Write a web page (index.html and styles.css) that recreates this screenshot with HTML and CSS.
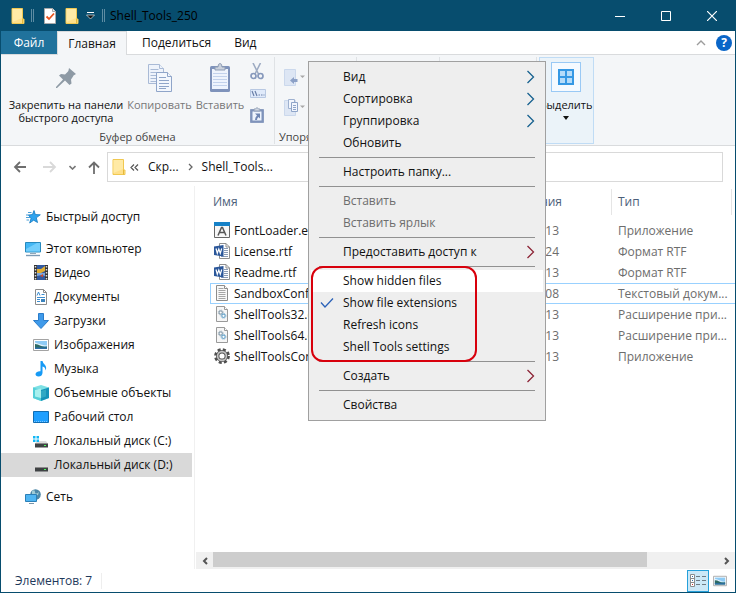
FILE: index.html
```html
<!DOCTYPE html>
<html lang="ru">
<head>
<meta charset="utf-8">
<title>Shell_Tools_250</title>
<link rel="stylesheet" href="styles.css">
</head>
<body>
<svg class="defs" aria-hidden="true">
  <defs>
    <symbol id="folder" viewBox="0 0 16 18">
      <path d="M2 1.500h10.500v10.500h1.500v4.500H2z" fill="#ffe08a" stroke="#f0c851"/>
      <path d="M2.500 2h9.500v9L2.500 15z" fill="#ffeaa6"/>
      <path d="M12.500 12v4.500" stroke="#e5b93c" fill="none"/>
    </symbol>
    <symbol id="word" viewBox="0 0 16 16">
      <path d="M5.500.500h6.500l3.500 3.500v11.500H5.500z" fill="#fff" stroke="#8f8f8f"/>
      <path d="M12 .500v3.500h3.500" fill="none" stroke="#8f8f8f"/>
      <path d="M10 5.500h4M10 7.500h4M10 9.500h4M10 11.500h4M7 13.500h7" stroke="#8a9bb5"/>
      <path d="M0 3.500 9.500 2v11.500L0 12z" fill="#2b579a"/>
      <path d="M2 5.500 3.300 10.200 4.800 6l1.500 4.200 1.400-4.700" fill="none" stroke="#fff" stroke-width="1.200"/>
    </symbol>
    <symbol id="dll" viewBox="0 0 16 16">
      <path d="M2.500.500h8l3 3v12h-11z" fill="#f6f6f6" stroke="#999"/>
      <path d="M10.500.500v3h3" fill="#fff" stroke="#999"/>
      <circle cx="6.700" cy="6.500" r="1.700" fill="#fff" stroke="#8ea1b0" stroke-width="1.200"/>
      <circle cx="6.700" cy="6.500" r="2.500" fill="none" stroke="#a3b4c0" stroke-dasharray="1 1" stroke-width="1"/>
      <circle cx="9.500" cy="9.800" r="1.700" fill="#fff" stroke="#72a9cc" stroke-width="1.200"/>
      <circle cx="9.500" cy="9.800" r="2.500" fill="none" stroke="#8fbcd8" stroke-dasharray="1 1" stroke-width="1"/>
    </symbol>
    <symbol id="text" viewBox="0 0 16 16">
      <path d="M2.500.500h8l3 3v12h-11z" fill="#f8f8f8" stroke="#8c8c8c"/>
      <path d="M10.500.500v3h3" fill="#fff" stroke="#8c8c8c"/>
      <path d="M4.500 3.500h5M4.500 5.500h7M4.500 7.500h7M4.500 9.500h7M4.500 11.500h7M4.500 13.500h7" stroke="#a5a5a5"/>
    </symbol>
    <symbol id="drive" viewBox="0 0 16 16">
      <path d="M4 8h9l2 3H2z" fill="#dcdcdc"/>
      <path d="M2 10.500h13V14.500H2z" fill="#3f4244"/>
      <path d="M2 10.500h13" stroke="#8c8c8c"/>
      <path d="M11 12h2v1h-2z" fill="#4cff5a"/>
    </symbol>
    <symbol id="picture" viewBox="0 0 16 14">
      <path d="M.5 1.500h15v11H.5z" fill="#fff" stroke="#a3a3a3"/>
      <path d="M2 3h12v8H2z" fill="#8ecbf5"/>
      <path d="M2 4.500q3 1 6 2t6 1V8H2z" fill="#e3f2fc"/>
      <path d="M2 6q3 0 5 1.500t7 1V11H2z" fill="#2d6a64"/>
      <path d="M2 9.500h12V11H2z" fill="#2d6fa8"/>
    </symbol>
    <symbol id="chevron" viewBox="0 0 9 14"><path d="M1.500 1 7.500 7l-6 6" fill="none" stroke="currentColor" stroke-width="1.300"/></symbol>
  </defs>
</svg>

<div class="window">
  <header class="titlebar">
    <svg class="i-folder" aria-hidden="true"><use href="#folder"/></svg>
    <span class="grip"></span>
    <button class="quick" aria-label="Свойства">
      <svg width="14" height="16" viewBox="0 0 14 16"><path d="M1.500.500h8l3 3v12h-11z" fill="#fff" stroke="#a9a9a9"/><path d="M9.500.500v3h3" fill="#eee" stroke="#a9a9a9"/><path d="M3.500 8.500 6 11l5-5.500" fill="none" stroke="#e8541e" stroke-width="1.800"/></svg>
    </button>
    <button class="quick" aria-label="Новая папка"><svg class="i-folder"><use href="#folder"/></svg></button>
    <button class="quick drop" aria-label="Настройка панели">
      <svg width="9" height="8" viewBox="0 0 9 8"><path d="M1 .5h7" stroke="#fff"/><path d="M.5 3h8L4.500 7z" fill="#111" stroke="#dfe9ee" stroke-width=".7"/></svg>
    </button>
    <span class="grip"></span>
    <h1>Shell_Tools_250</h1>
    <button class="caption" aria-label="Свернуть"><svg width="10" height="10"><path d="M0 5.500h10" stroke="#fff"/></svg></button>
    <button class="caption" aria-label="Развернуть"><svg width="10" height="10"><path d="M.5.500h9v9h-9z" fill="none" stroke="#fff"/></svg></button>
    <button class="caption" aria-label="Закрыть"><svg width="10" height="10"><path d="m0 0 10 10M10 0 0 10" stroke="#fff" stroke-width="1.200"/></svg></button>
  </header>

  <div class="tabs">
    <button class="tab file">Файл</button>
    <button class="tab active">Главная</button>
    <button class="tab">Поделиться</button>
    <button class="tab view">Вид</button>
    <span class="fill"></span>
    <button class="fold" aria-label="Свернуть ленту"><svg width="10" height="6"><path d="m1 5 4-4 4 4" fill="none" stroke="#9c9c9c" stroke-width="1.400"/></svg></button>
    <button class="help" aria-label="Справка">?</button>
  </div>

  <div class="ribbon">
    <section class="group clipboard">
      <div class="tools">
        <button class="big pin">
          <svg width="22" height="22" viewBox="0 0 22 22"><path d="m14 1 7 6-2.500 1.500-.5 1-2 3 .500 4-2 1.500-4.500-4.500L2 21H1v-1l7-7.500L4 8.500l2-1.500 4 .5 3-3 .500-1z" fill="#8e9aa5"/></svg>
          <span>Закрепить на панели<br>быстрого доступа</span>
        </button>
        <button class="big copy" disabled>
          <svg width="26" height="30" viewBox="0 0 26 30"><g fill="#eef3fb" stroke="#a9bad6"><path d="M1.500 1.500h11l4 4v15h-15z"/><path d="M12.500 1.500v4h4"/><path d="M3.500 6.500h8M3.500 9.500h10M3.500 12.500h10M3.500 15.500h10M3.500 18.500h6"/></g><g fill="#f3f7fd" stroke="#8fa5c9"><path d="M9.500 9.500h11l4 4v15h-15z"/><path d="M20.500 9.500v4h4"/><path d="M12 14.500h7M12 17.500h10M12 20.500h10M12 23.500h10M12 25.500h7"/></g></svg>
          <span>Копировать</span>
        </button>
        <button class="big paste" disabled>
          <svg width="22" height="30" viewBox="0 0 22 30"><rect x="1" y="3" width="20" height="26" rx="1.500" fill="#7f93bb"/><path d="M3 6h16v20H3z" fill="#eef4fd"/><path d="M4 10.500h14M4 13.500h14M4 16.500h14M4 19.500h14M4 22.500h14" stroke="#c2d2ec"/><path d="M6 7V4h3q0-3.500 2-3.500T13 4h3v3z" fill="#cbd2dd" stroke="#8f9db5"/></svg>
          <span>Вставить</span>
        </button>
        <div class="small-tools">
          <button disabled aria-label="Вырезать"><svg width="14" height="17" viewBox="0 0 14 17"><path d="m3 0 5.500 11M10.500 0 5 11" stroke="#9dabc3" stroke-width="1.600" fill="none"/><g fill="none" stroke="#8799bc" stroke-width="1.700"><ellipse cx="3.500" cy="13" rx="2.500" ry="2.500"/><ellipse cx="10.500" cy="13" rx="2.500" ry="2.500"/></g></svg></button>
          <button disabled aria-label="Скопировать путь"><svg width="16" height="9" viewBox="0 0 16 9"><path d="M.5.500h15v8H.5z" fill="#e0eafa" stroke="#b8c8e2"/><path d="m2 2 2 5M5 2l2 5M8.500 6h1.500M11 6h1.500M13.500 6h1" stroke="#6a7fa8" stroke-width="1.200"/></svg></button>
          <button disabled aria-label="Вставить ярлык"><svg width="14" height="16" viewBox="0 0 14 16"><path d="M.5 2.500h13v13H.5z" fill="#7f93bb" stroke="#8b9dc0"/><path d="M2.500 4.500h9v9h-9z" fill="#eef4fd"/><path d="M4 4V2h1.500q1.500-3 3 0H10v2z" fill="#cfd6e0" stroke="#8f9db5"/><path d="M5 6.500h5v5L8.500 10Q7 11 7 13H5q0-3 2-4.500z" fill="#6f86b3"/></svg></button>
        </div>
      </div>
      <h2>Буфер обмена</h2>
    </section>
    <section class="group organize">
      <div class="tools">
        <div class="small-tools wide">
          <button disabled aria-label="Переместить в"><svg width="21" height="18" viewBox="0 0 21 18"><path d="M.5.500h11v16H.5z" fill="#dde6f4" stroke="#cbd8ec"/><path d="M6 11.500 10 8v2h3.500v3H10v2z" fill="#8ba0c6"/><path d="M16 6.500h5L18.500 9z" fill="#a7a7a7"/></svg></button>
          <button disabled aria-label="Копировать в"><svg width="21" height="18" viewBox="0 0 21 18"><path d="M.5 1.500h11v15H.5z" fill="#dde6f4" stroke="#cbd8ec"/><path d="M4.500.500h6v9h-6z" fill="#f2f6fd" stroke="#9eb1d0"/><path d="M7.500 3.500h6v9h-6z" fill="#f2f6fd" stroke="#8fa5c9"/><path d="M9 6.500h3M9 8.500h3M9 10.500h3" stroke="#8fa5c9"/><path d="M16 6.500h5L18.500 9z" fill="#a7a7a7"/></svg></button>
        </div>
      </div>
      <h2>Упоря</h2>
    </section>
    <section class="group create"></section>
    <section class="group open"></section>
    <section class="group select">
      <button class="big select-all">
        <span class="tile"><svg width="16" height="16"><path d="M1 1h14v14H1zM8 1v14M1 8h14" fill="#b5dcfa" stroke="#3598e4" stroke-width="2"/></svg></span>
        <span>Выделить</span>
        <svg width="6" height="4"><path d="M0 0h6L3 4z" fill="#111"/></svg>
      </button>
    </section>
  </div>

  <div class="address-row">
    <button class="nav-btn" aria-label="Назад"><svg width="14" height="12"><path d="M13 6H2M7 1 2 6l5 5" fill="none" stroke="#6e6e6e" stroke-width="1.800"/></svg></button>
    <button class="nav-btn" aria-label="Вперед" disabled><svg width="14" height="12"><path d="M0 6h12M7 1l5 5-5 5" fill="none" stroke="#d9d9d9" stroke-width="1.800"/></svg></button>
    <button class="nav-btn recent" aria-label="Последние расположения"><svg width="7" height="5"><path d="m.5 1 3 3 3-3" fill="none" stroke="#777" stroke-width="1.600"/></svg></button>
    <button class="nav-btn up" aria-label="Вверх"><svg width="12" height="13"><path d="M6 13V2M1 6.500 6 1.500l5 5" fill="none" stroke="#6e6e6e" stroke-width="1.800"/></svg></button>
    <nav class="address" aria-label="Адрес">
      <svg class="i-folder" aria-hidden="true"><use href="#folder"/></svg>
      <svg class="back-crumbs" width="9" height="7"><path d="m4 .5-3 3 3 3M8 .5l-3 3 3 3" fill="none" stroke="#555" stroke-width="1.200"/></svg>
      <a href="#">Скр...</a>
      <svg class="crumb-arrow" width="5" height="8"><path d="m1 1 3 3-3 3" fill="none" stroke="#666" stroke-width="1.300"/></svg>
      <a href="#">Shell_Tools...</a>
    </nav>
  </div>

  <main class="content">
    <nav class="tree" aria-label="Области">
      <ul>
        <li class="root"><a href="#"><svg width="16" height="16" viewBox="0 0 16 16"><path d="m9 1.500 1.300 4 5 .3-4 3 1.200 4.700-3.800-2.300-4 2.800L6 9.500 3.500 6l4-.5z" fill="#2ea3ee" stroke="#1278c0" stroke-width=".8"/><path d="M3 3.500h3.500M1 6h3M1 8.500h4M1.500 11H4" stroke="#4a9fd8"/></svg>Быстрый доступ</a></li>
      </ul>
      <ul>
        <li class="root"><a href="#"><svg width="16" height="16" viewBox="0 0 16 16"><path d="M.5 1.500h15v9.500H.5z" fill="#43b7f5" stroke="#2789bd"/><path d="M1 8 12 2h3v8.500H1z" fill="#73cefc"/><path d="M5 12.500h6" stroke="#92a8b9"/><path d="M1 14.500h14" stroke="#7c9bb5" stroke-width="1.400"/></svg>Этот компьютер</a></li>
        <li><a href="#"><svg width="16" height="16" viewBox="0 0 16 16"><path d="M1 0h14v15H1z" fill="#333"/><path d="M4 0h8v15H4z" fill="#31599f"/><path d="M4 4h4l4-3v5L8 8H4z" fill="#e0ad32"/><path d="M4 8h8v3l-3-1-5 1z" fill="#7fa6dc"/><path d="m7 11 3-2v3z" fill="#d74826"/><path d="M2.500 1v14M13.500 1v14" stroke="#ddd" stroke-width="1.500" stroke-dasharray="1.500 1.500"/></svg>Видео</a></li>
        <li><a href="#"><svg width="16" height="16" viewBox="0 0 16 16"><path d="M2.500.500h8l3 3v12h-11z" fill="#fff" stroke="#8c8c8c"/><path d="M10.500.500v3h3" fill="none" stroke="#8c8c8c"/><path d="m4 6.500 1.500-3.500L7 6.500M8.500 5.500h3M4 8.500h8M4 10.500h3M4 12.500h3" stroke="#3c8dd0" fill="none"/><path d="M8 10h4v3H8z" fill="#3a83bd"/></svg>Документы</a></li>
        <li><a href="#"><svg width="16" height="16" viewBox="0 0 16 16"><path d="M5.500.500h5v7h5L8 15.500.5 7.500h5z" fill="#3f9aea" stroke="#2a7cca"/></svg>Загрузки</a></li>
        <li><a href="#"><svg width="16" height="14"><use href="#picture"/></svg>Изображения</a></li>
        <li><a href="#"><svg width="16" height="16" viewBox="0 0 16 16"><path d="M7.500 0h2q.5 2.500 2.500 4 2 2.500.5 5.500 0-3.500-3-4V12q-.5 3.500-4 3.500-3-.3-3-2.500 1-3 5-2.700z" fill="#169af5"/></svg>Музыка</a></li>
        <li><a href="#"><svg width="16" height="16" viewBox="0 0 16 16"><path d="M0 2.500 8 0l8 2.500V13l-8 3-8-3z" fill="#7de0e4"/><path d="M0 2.500 8 5v11l-8-3z" fill="#55cfd8"/><path d="m8 5 8-2.500V13l-8 3z" fill="#1593b9"/><path d="m2 5 6-1.500V13l-6-1.500z" fill="#a8f0ee"/><path d="m8 6 5-1.500v7L8 13z" fill="#2fa9c4"/></svg>Объемные объекты</a></li>
        <li><a href="#"><svg width="16" height="16" viewBox="0 0 16 16"><path d="M.5 2.500h15v11H.5z" fill="#1e9fff" stroke="#106db3"/><path d="M1 12.500h14" stroke="#7cc7ff" stroke-dasharray="1 1"/></svg>Рабочий стол</a></li>
        <li><a href="#"><svg width="16" height="16" viewBox="0 0 16 16"><use href="#drive" width="16" height="16"/><path d="M0 3h2.500v2.500H0zM3.500 3H6v2.500H3.500zM0 6.500h2.500V9H0zM3.500 6.500H6V9H3.500z" fill="#12b7f5"/></svg>Локальный диск (C:)</a></li>
        <li class="selected"><a href="#"><svg width="16" height="16"><use href="#drive"/></svg>Локальный диск (D:)</a></li>
      </ul>
      <ul>
        <li class="root"><a href="#"><svg width="16" height="16" viewBox="0 0 16 16"><circle cx="10.500" cy="5.500" r="5.300" fill="#4d87a7"/><path d="M7 2q3-2 3 1t4 0l-1 3-3 1-1 2-2-2z" fill="#9fcbd6"/><path d="M.5 5.500h11v7H.5z" fill="#4fb5f2" stroke="#2b7fb7"/><path d="M4 14.500h5" stroke="#7895aa"/></svg>Сеть</a></li>
      </ul>
    </nav>

    <section class="files">
      <table>
        <colgroup><col class="c-name"><col class="c-date"><col class="c-type"><col></colgroup>
        <thead><tr><th>Имя</th><th class="date">Дата изменения</th><th class="type">Тип</th><th class="end"></th></tr></thead>
        <tbody>
          <tr><td><svg width="16" height="16"><path d="M.5.500h15v15H.5z" fill="#f7f7f7" stroke="#666"/><path d="M0 0h16v4H0z" fill="#1681c7"/><path d="M4 13.500 7.500 5.500h1L12 13.500M5.500 10.500h5" fill="none" stroke="#555" stroke-width="1.500"/></svg>FontLoader.exe</td><td class="date">13</td><td class="type">Приложение</td><td></td></tr>
          <tr><td><svg width="16" height="16"><use href="#word"/></svg>License.rtf</td><td class="date">24</td><td class="type">Формат RTF</td><td></td></tr>
          <tr><td><svg width="16" height="16"><use href="#word"/></svg>Readme.rtf</td><td class="date">13</td><td class="type">Формат RTF</td><td></td></tr>
          <tr class="focus"><td><svg width="16" height="16"><use href="#text"/></svg>SandboxConfig</td><td class="date">08</td><td class="type">Текстовый докум...</td><td></td></tr>
          <tr><td><svg width="16" height="16"><use href="#dll"/></svg>ShellTools32.dll</td><td class="date">13</td><td class="type">Расширение при...</td><td></td></tr>
          <tr><td><svg width="16" height="16"><use href="#dll"/></svg>ShellTools64.dll</td><td class="date">13</td><td class="type">Расширение при...</td><td></td></tr>
          <tr><td><svg width="16" height="16" viewBox="0 0 16 16"><circle cx="8" cy="8" r="6.400" fill="none" stroke="#4f4f4f" stroke-width="3" stroke-dasharray="2.900 2.130"/><circle cx="8" cy="8" r="4.300" fill="#fff" stroke="#555" stroke-width="3.400"/><circle cx="8" cy="8" r="4.400" fill="none" stroke="#c4c4c4" stroke-width="1.600"/></svg>ShellToolsCon</td><td class="date">13</td><td class="type">Приложение</td><td></td></tr>
        </tbody>
      </table>
      <div class="scrollbar">
        <button aria-label="Прокрутить влево"><svg width="6" height="8"><path d="M5 1 2 4l3 3" fill="none" stroke="#555" stroke-width="2"/></svg></button>
        <div class="track"><div class="thumb"></div></div>
        <button aria-label="Прокрутить вправо"><svg width="6" height="8"><path d="m1 1 3 3-3 3" fill="none" stroke="#555" stroke-width="2"/></svg></button>
      </div>
    </section>
  </main>

  <footer class="status">
    <span class="count">Элементов: 7</span>
    <span class="fill"></span>
    <button class="mode on" aria-label="Таблица"><svg width="16" height="13"><path d="M.5.500h4v12h-4zM.5 4.500h4M.5 8.500h4" fill="#fff" stroke="#8c8c8c"/><path d="M6 2.500h4M12 2.500h4M6 6.500h4M12 6.500h4M6 10.500h4M12 10.500h4" stroke="#6f7b83"/><path d="M2 2.500h1M2 6.500h1" stroke="#2f6ea5"/><path d="M2 10.500h1" stroke="#c33"/></svg></button>
    <button class="mode" aria-label="Крупные значки"><svg width="14" height="12"><use href="#picture"/></svg></button>
  </footer>

  <div class="menu" role="menu">
    <button role="menuitem">Вид<svg class="arrow blue"><use href="#chevron"/></svg></button>
    <button role="menuitem">Сортировка<svg class="arrow blue"><use href="#chevron"/></svg></button>
    <button role="menuitem">Группировка<svg class="arrow blue"><use href="#chevron"/></svg></button>
    <button role="menuitem">Обновить</button>
    <hr>
    <button role="menuitem">Настроить папку...</button>
    <hr>
    <button role="menuitem" disabled>Вставить</button>
    <button role="menuitem" disabled>Вставить ярлык</button>
    <hr>
    <button role="menuitem">Предоставить доступ к<svg class="arrow red"><use href="#chevron"/></svg></button>
    <hr>
    <button role="menuitem" class="hot">Show hidden files</button>
    <button role="menuitem"><svg class="check" width="14" height="10"><path d="m1 4.500 4 4.500 8-8.500" fill="none" stroke="#2b62b8" stroke-width="1.300"/></svg>Show file extensions</button>
    <button role="menuitem">Refresh icons</button>
    <button role="menuitem">Shell Tools settings</button>
    <hr>
    <button role="menuitem">Создать<svg class="arrow red"><use href="#chevron"/></svg></button>
    <hr>
    <button role="menuitem">Свойства</button>
    <span class="marker"></span>
  </div>
</div>
</body>
</html>
```
FILE: styles.css
```css
* { box-sizing: border-box; }

body {
  margin: 0;
  font: 12px/16px "Open Sans", "Noto Sans", sans-serif;
  color: #111;
  background: #fff;
}

button {
  padding: 0;
  border: 0;
  background: none;
  font: inherit;
  color: inherit;
}

a { color: inherit; text-decoration: none; }
ul { margin: 0; padding: 0; list-style: none; }
svg { display: block; flex: none; }
.defs { position: absolute; width: 0; height: 0; }
.i-folder { width: 16px; height: 18px; }
.fill { flex: 1; }

.window {
  position: relative;
  display: flex;
  flex-direction: column;
  min-height: 100vh;
  border: 1px solid #074d6e;
  border-top: 0;
  overflow: hidden;
}

/* Title bar */
.titlebar {
  display: flex;
  align-items: center;
  height: 31px;
  padding-left: 9px;
  background: #074d6e;
}
.titlebar h1 { flex: 1; margin: 0; font-size: 12px; line-height: 16px; font-weight: 400; color: #000; }
.grip { width: 3px; height: 13px; margin: 0 5px; border: 1px solid #5d8ca3; border-width: 0 1px; }
.quick { display: grid; place-items: center; width: 22px; height: 22px; }
.quick.drop { width: 14px; }
.caption { display: grid; place-items: center; width: 46px; height: 30px; }

/* Ribbon tabs */
.tabs {
  display: flex;
  height: 24px;
  border-bottom: 1px solid #d9dbdd;
}
.tab { padding: 0 15px; }
.tab.file { width: 56px; padding: 0; background: #20729c; color: #fff; }
.tab.active {
  width: 70px;
  height: 24px;
  padding: 0;
  background: #f4f6f8;
  border: 1px solid #d9dbdd;
  border-bottom: 0;
}
.tab.view { padding: 0 8px; }
.fold { margin-right: 8px; padding: 0 2px; }
.help {
  align-self: center;
  width: 16px;
  height: 16px;
  margin-right: 3px;
  border-radius: 50%;
  background: #0a66c8;
  color: #fff;
  font-weight: 700;
  line-height: 16px;
}

/* Ribbon */
.ribbon {
  display: flex;
  height: 91px;
  padding-top: 2px;
  background: #f4f6f8;
  border-bottom: 1px solid #d9dbdd;
  font-size: 11px;
}
.group {
  display: flex;
  flex-direction: column;
  height: 87px;
  border-right: 1px solid #dfe2e5;
}
.group h2 { margin: auto 0 0; font-size: 11px; line-height: 14px; font-weight: 400; color: #444; text-align: center; }
.clipboard { width: 274px; }
.organize { width: 82px; }
.organize h2 { padding-left: 4px; text-align: left; }
.create { width: 83px; }
.open { width: 97px; }
.select { margin-left: 2px; width: 55px; background: #ebf3f9; border: 1px solid #c0dcf5; }
.tools { display: flex; padding-top: 6px; }
.big { display: flex; flex-direction: column; align-items: center; line-height: 13px; white-space: nowrap; }
.big svg { margin-bottom: 5px; }
.big.pin { width: 126px; padding: 4px 0 0 4px; }
.big.pin svg { margin-bottom: 9px; }
.big.copy { width: 65px; }
.big.paste { width: 56px; }
.big:disabled { color: #777; }
.small-tools { display: flex; flex-direction: column; gap: 9px; padding-left: 2px; }
.small-tools.wide { gap: 12px; padding: 6px 0 0 9px; }
.select-all { width: 52px; }
.tile { display: grid; place-items: center; width: 30px; height: 30px; margin: 4px 0 6px; border: 1px solid #99c9f5; background: #f5faff; }
.tile svg { margin: 0; }
.select-all > svg { margin-top: 5px; }

/* Address row */
.address-row { display: flex; align-items: center; padding: 6px 12px 4px; }
.nav-btn { display: grid; place-items: center; flex: none; width: 14px; height: 30px; margin-right: 16px; }
.nav-btn.recent { width: 7px; margin: 0 11px 0 -4px; }
.nav-btn.up { width: 14px; margin-right: 6px; }
.address { display: flex; flex: 1; align-items: center; height: 30px; padding-left: 3px; border: 1px solid #d9d9d9; }
.back-crumbs { margin: 0 9px 0 3px; }
.crumb-arrow { margin: 0 9px; }

/* Body */
.content { display: flex; flex: 1; }
.tree { flex: none; width: 194px; padding: 19px 2px 0 0; border-right: 1px solid #f0f0f0; }
.tree ul { margin-bottom: 8px; }
.tree a { display: flex; align-items: center; gap: 5px; height: 24px; padding-left: 32px; white-space: nowrap; }
.tree .root a { padding-left: 24px; }
.tree .selected { background: #d9d9d9; }

.files { display: flex; flex: 1; flex-direction: column; justify-content: space-between; min-width: 0; padding: 3px 0 0 1px; }
table { width: calc(100% - 14px); margin-left: 14px; border-collapse: separate; border-spacing: 0; table-layout: fixed; }
.c-name { width: 249px; }
.c-date { width: 153px; }
.c-type { width: 120px; }
th, td { padding: 0; height: 21px; overflow: hidden; white-space: nowrap; text-align: left; }
th { height: 26px; border-right: 1px solid #e5e5e5; font-weight: 400; color: #4c607a; }
th:first-child { border: 0; padding-left: 3px; }
th.end { border: 0; }
.date { padding-right: 53px; text-align: right; color: #6d6d6d; }
th.date { padding-right: 49px; color: #4c607a; }
.type { padding-left: 6px; color: #6d6d6d; }
th.type { color: #4c607a; }
td { border: 1px solid transparent; border-width: 1px 0; line-height: 19px; }
td:first-child { padding-left: 3px; border-left-width: 1px; }
td svg { display: inline-block; margin: 1px 4px 0 0; vertical-align: top; }
tbody::before { content: ""; display: block; height: 5px; }
.focus td { border-color: #99d1ff; }

.scrollbar { display: flex; height: 17px; background: #f0f0f0; }
.scrollbar button { display: grid; place-items: center; width: 17px; }
.track { flex: 1; }
.thumb { width: 86%; height: 15px; background: #cdcdcd; }

/* Status bar */
.status { display: flex; align-items: center; height: 23px; padding: 0 4px 0 14px; color: #1e395b; }
.count { padding-right: 9px; border-right: 1px solid #eee; }
.mode { display: grid; place-items: center; width: 22px; height: 22px; }
.mode.on { background: #cce8f7; border: 1px solid #26a0da; }

/* Context menu */
.menu {
  position: absolute;
  top: 61px;
  left: 307px;
  width: 238px;
  padding: 4px 2px;
  background: #eee;
  border: 1px solid #a0a0a0;
}
.menu button {
  position: relative;
  display: flex;
  align-items: center;
  width: 100%;
  height: 22px;
  padding-left: 32px;
}
.menu button:disabled { color: #6d6d6d; }
.menu .hot { background: #fff; }
.menu hr { height: 1px; margin: 3px 8px; border: 0; background: #919191; }
.arrow { width: 9px; height: 14px; margin: 0 8px 0 auto; }
.blue { color: #17618f; }
.red { color: #8c2436; }
.check { position: absolute; left: 9px; top: 6px; }
.marker {
  position: absolute;
  top: 204px;
  left: 2px;
  width: 166px;
  height: 96px;
  border: 2px solid #d8000c;
  border-radius: 12px;
  pointer-events: none;
}
```
